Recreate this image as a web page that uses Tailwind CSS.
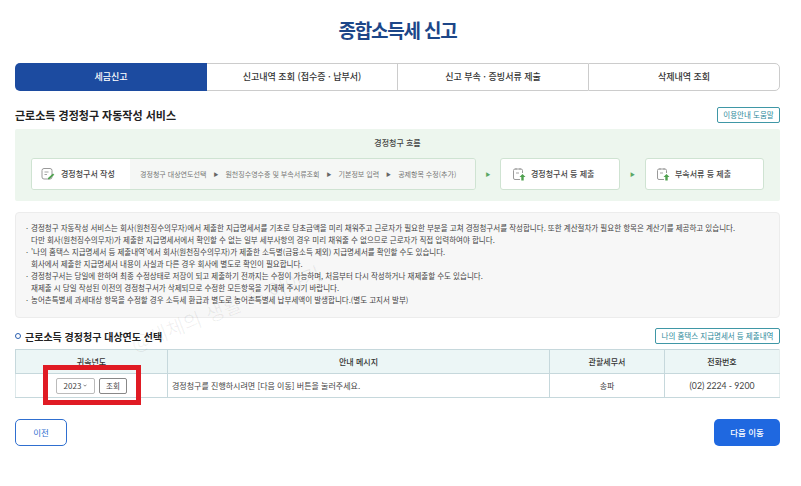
<!DOCTYPE html>
<html lang="ko">
<head>
    <meta charset="UTF-8">
    <title>종합소득세 신고</title>
    <script src="https://cdn.jsdelivr.net/npm/@tailwindcss/browser@4"></script>
</head>
<body class="bg-white w-[801px] h-[486px] overflow-hidden relative font-['Noto_Sans_CJK_KR','Noto_Sans',sans-serif] text-[#333]">

    <main class="ml-[15px] w-[765px] flex flex-col">
        <h1 class="h-[63px] pt-[16px] text-center text-[19px] leading-[28px] font-bold text-[#1c4688] tracking-[-1.2px]">종합소득세 신고</h1>

        <!-- Tabs -->
        <nav class="grid grid-cols-[192px_190px_191px_192px] h-[28px] text-[9px] font-medium text-[#333]">
            <a class="flex items-center justify-center bg-[#1c4ba0] text-white rounded-l-[5px]">세금신고</a>
            <a class="flex items-center justify-center border-y border-[#ccc]">신고내역 조회 (접수증 · 납부서)</a>
            <a class="flex items-center justify-center border-y border-l border-[#ccc]">신고 부속 · 증빙서류 제출</a>
            <a class="flex items-center justify-center border border-[#ccc] rounded-r-[5px]">삭제내역 조회</a>
        </nav>

        <!-- Service heading -->
        <div class="flex items-center justify-between mt-[16px] h-[16px]">
            <h2 class="text-[11px] font-bold text-[#222]">근로소득 경정청구 자동작성 서비스</h2>
            <button class="h-[16px] w-[63px] border border-[#3f97a6] rounded-[2px] text-[7.5px] text-[#2d8a9a]">이용안내 도움말</button>
        </div>

        <!-- Flow panel -->
        <section class="mt-[6px] h-[72px] bg-[#edf6ee] rounded-[2px] flex flex-col">
            <p class="text-center text-[8px] font-medium text-[#444] leading-[10px] mt-[9px]">경정청구 흐름</p>
            <div class="flex items-center mt-[10px] pl-[16px]">
                <div class="flex w-[445px] h-[32px] border border-[#cfe3d2] rounded-[3px] overflow-hidden">
                    <div class="w-[98px] bg-white flex items-center pl-[9px] gap-[6px] text-[8px] font-medium text-[#444]">
                        <svg class="w-[14px] h-[14px] shrink-0" viewBox="0 0 14 14" fill="none">
                            <rect x="1" y="1.5" width="10" height="10.5" rx="2" stroke="#9a9a9a" stroke-width="1"/>
                            <path d="M3.5 5h4M3.5 7.5h2.5" stroke="#9a9a9a" stroke-width="0.9"/>
                            <path d="M7 11l5-4.500 1.300 1.300-5 4.500H7z" fill="#4fa14f"/>
                        </svg>
                        <span class="whitespace-nowrap">경정청구서 작성</span>
                    </div>
                    <div class="flex-1 bg-[#f5f7f5] flex items-center pl-[10px] gap-[7px] text-[7px] text-[#777] whitespace-nowrap">
                        <span>경정청구 대상연도선택</span><i class="not-italic text-[5px] text-[#666]">▶</i>
                        <span>원천징수영수증 및 부속서류조회</span><i class="not-italic text-[5px] text-[#666]">▶</i>
                        <span>기본정보 입력</span><i class="not-italic text-[5px] text-[#666]">▶</i>
                        <span>공제항목 수정(추가)</span>
                    </div>
                </div>
                <span class="w-[24px] text-center text-[5px] text-[#5aa765]">▶</span>
                <div class="w-[120px] h-[32px] bg-white border border-[#cfe3d2] rounded-[3px] flex items-center pl-[11px] gap-[5px] text-[8px] font-medium text-[#444]">
                    <svg class="w-[14px] h-[14px] shrink-0" viewBox="0 0 14 14" fill="none">
                        <path d="M8 12.500H3a1.500 1.500 0 0 1-1.500-1.500V3.500A1.500 1.500 0 0 1 3 2h6a1.500 1.500 0 0 1 1.500 1.500V6" stroke="#9a9a9a"/>
                        <path d="M4 1v2M8 1v2M4 6h3" stroke="#9a9a9a" stroke-width="0.9"/>
                        <path d="M10.500 7l3 3h-1.800v3.500H9.300V10H7.500z" fill="#4fa14f"/>
                    </svg>
                    <span class="whitespace-nowrap">경정청구서 등 제출</span>
                </div>
                <span class="w-[25px] text-center text-[5px] text-[#5aa765]">▶</span>
                <div class="w-[119px] h-[32px] bg-white border border-[#cfe3d2] rounded-[3px] flex items-center pl-[10px] gap-[5px] text-[8px] font-medium text-[#444]">
                    <svg class="w-[14px] h-[14px] shrink-0" viewBox="0 0 14 14" fill="none">
                        <path d="M8 12.500H3a1.500 1.500 0 0 1-1.500-1.500V3.500A1.500 1.500 0 0 1 3 2h6a1.500 1.500 0 0 1 1.500 1.500V6" stroke="#9a9a9a"/>
                        <path d="M4 1v2M8 1v2M4 6h3" stroke="#9a9a9a" stroke-width="0.9"/>
                        <path d="M10.500 7l3 3h-1.800v3.500H9.300V10H7.500z" fill="#4fa14f"/>
                    </svg>
                    <span class="whitespace-nowrap">부속서류 등 제출</span>
                </div>
            </div>
        </section>

        <!-- Notice -->
        <section class="mt-[11px] h-[106px] bg-[#f7f7f7] border border-[#ececec] rounded-[4px] pt-[9px] pl-[15px] text-[7.5px] leading-[11.500px] text-[#444] whitespace-nowrap">
            <ul class="flex flex-col gap-[1px]">
                <li class="relative"><span class="absolute -left-[5px]">·</span>경정청구 자동작성 서비스는 회사(원천징수의무자)에서 제출한 지급명세서를 기초로 당초금액을 미리 채워주고 근로자가 필요한 부분을 고쳐 경정청구서를 작성합니다. 또한 계산절차가 필요한 항목은 계산기를 제공하고 있습니다.<br>다만 회사(원천징수의무자)가 제출한 지급명세서에서 확인할 수 없는 일부 세부사항의 경우 미리 채워줄 수 없으므로 근로자가 직접 입력하여야 합니다.</li>
                <li class="relative"><span class="absolute -left-[5px]">·</span>'나의 홈택스 지급명세서 등 제출내역'에서 회사(원천징수의무자)가 제출한 소득별(금융소득 제외) 지급명세서를 확인할 수도 있습니다.<br>회사에서 제출한 지급명세서 내용이 사실과 다른 경우 회사에 별도로 확인이 필요합니다.</li>
                <li class="relative"><span class="absolute -left-[5px]">·</span>경정청구서는 당일에 한하여 최종 수정상태로 저장이 되고 제출하기 전까지는 수정이 가능하며, 처음부터 다시 작성하거나 재제출할 수도 있습니다.<br>재제출 시 당일 작성된 이전의 경정청구서가 삭제되므로 수정한 모든항목을 기재해 주시기 바랍니다.</li>
                <li class="relative"><span class="absolute -left-[5px]">·</span>농어촌특별세 과세대상 항목을 수정할 경우 소득세 환급과 별도로 농어촌특별세 납부세액이 발생합니다.(별도 고지서 발부)</li>
            </ul>
        </section>

        <!-- Year select heading -->
        <div class="flex items-center justify-between mt-[10px] h-[16px]">
            <h2 class="flex items-center gap-[4px] text-[10px] font-bold text-[#222]">
                <span class="w-[6px] h-[6px] rounded-full border-[1.5px] border-[#2a5fb0]"></span>근로소득 경정청구 대상연도 선택
            </h2>
            <button class="h-[16px] w-[125px] border border-[#3f97a6] rounded-[2px] text-[7.5px] text-[#2d8a9a]">나의 홈택스 지급명세서 등 제출내역</button>
        </div>

        <!-- Table -->
        <table class="mt-[5px] w-full table-fixed border-collapse text-[8px] text-[#444]">
            <thead>
                <tr class="h-[24px] bg-[#ecf6f6] text-[#333]">
                    <th class="w-[152px] font-medium border border-[#c6d8dc]">귀속년도</th>
                    <th class="font-medium border border-[#c6d8dc]">안내 메시지</th>
                    <th class="w-[115px] font-medium border border-[#c6d8dc]">관할세무서</th>
                    <th class="w-[115px] font-medium border border-[#c6d8dc] border-r-[#e5eeee]">전화번호</th>
                </tr>
            </thead>
            <tbody>
                <tr class="h-[24px]">
                    <td class="border border-[#c6d8dc] border-l-[#dde8ea]">
                        <div class="flex justify-center gap-[4px]">
                            <span class="w-[39px] h-[16px] border border-[#bbb] rounded-[2px] flex items-center justify-center gap-[2px] text-[8px]">2023<svg class="w-[4px] h-[3px]" viewBox="0 0 4 3" fill="none"><path d="M.5.700 2 2.200 3.500.700" stroke="#555" stroke-width="0.7"/></svg></span>
                            <span class="w-[28px] h-[16px] border border-[#888] rounded-[2px] flex items-center justify-center text-[7.5px]">조회</span>
                        </div>
                    </td>
                    <td class="border border-[#c6d8dc] pl-[4px]">경정청구를 진행하시려면 [다음 이동] 버튼을 눌러주세요.</td>
                    <td class="border border-[#c6d8dc] text-center">송파</td>
                    <td class="border border-[#c6d8dc] border-r-[#e5eeee] text-center text-[8.7px] font-['Lato',sans-serif]">(02) 2224 - 9200</td>
                </tr>
            </tbody>
        </table>

        <!-- Actions -->
        <div class="flex justify-between mt-[21px]">
            <button class="w-[52px] h-[27px] border border-[#2f6fd0] rounded-[5px] text-[8.5px] text-[#2f6fd0] bg-white">이전</button>
            <button class="w-[66px] h-[27px] rounded-[5px] text-[8.5px] font-medium text-white bg-[#1f68e0]">다음 이동</button>
        </div>
    </main>

    <!-- Watermark -->
    <div class="absolute left-[125px] top-[293px] -rotate-[21deg] text-[20px] text-[#000]/[0.06] whitespace-nowrap pointer-events-none">@세체의 생활 속 이야기</div>

    <!-- Red annotation box drawn over the screenshot -->
    <div class="absolute left-[43px] top-[365px] w-[98px] h-[40px] border-[5px] border-[#e01b24]"></div>
</body>
</html>
